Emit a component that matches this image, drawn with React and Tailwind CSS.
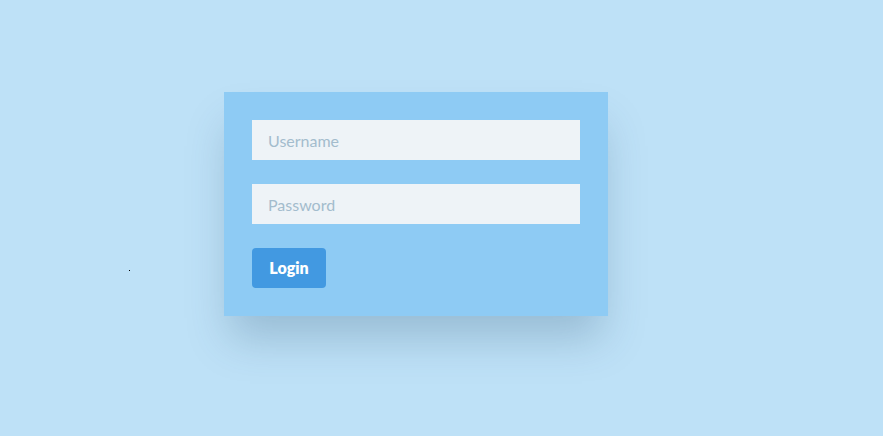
import React from "react";

const App = () => {
  return (
    <div
      className="relative w-full h-[436px] bg-[#bee1f7] pl-[224px] pt-[92px]"
      style={{ fontFamily: "Lato, 'Liberation Sans', sans-serif" }}
    >
      <span className="absolute left-[129px] top-[270px] w-px h-px bg-black" />
      <form className="w-[384px] h-[224px] bg-[#8ecbf4] p-7 flex flex-col items-start shadow-[0_28px_40px_-6px_rgba(40,80,110,0.25)]">
        <input
          type="text"
          placeholder="Username"
          className="w-full h-10 bg-[#eef3f7] px-4 text-base text-gray-700 placeholder-[#a3bccd] outline-none"
        />
        <input
          type="password"
          placeholder="Password"
          className="w-full h-10 mt-6 bg-[#eef3f7] px-4 text-base text-gray-700 placeholder-[#a3bccd] outline-none"
        />
        <button
          type="button"
          className="mt-6 w-[74px] h-10 rounded bg-[#4299e1] text-white font-extrabold text-base"
        >
          Login
        </button>
      </form>
    </div>
  );
};

export default App;
